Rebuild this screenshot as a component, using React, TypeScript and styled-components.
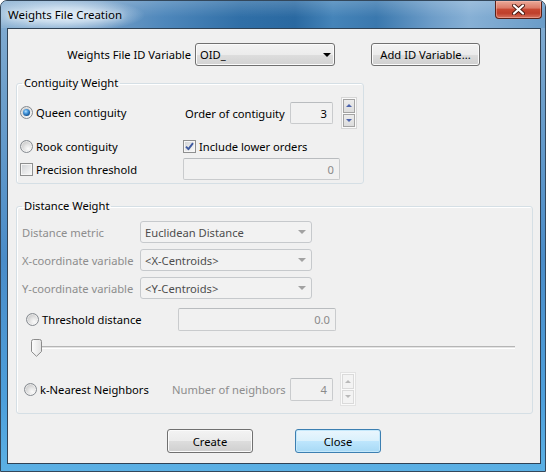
import React from 'react';
import styled, { createGlobalStyle, css } from 'styled-components';

const GlobalStyle = createGlobalStyle`
  html, body { margin: 0; padding: 0; background: #ffffff; }
  body {
    font-family: "Noto Sans", "Open Sans", "DejaVu Sans", sans-serif;
    font-size: 11.2px;
    color: #000;
  }
  * { box-sizing: border-box; }
`;

const Window = styled.div`
  width: 546px;
  height: 472px;
  display: flex;
  flex-direction: column;
  border: 1px solid #33475b;
  border-radius: 7px 7px 0 0;
  overflow: hidden;
  background: linear-gradient(180deg, #86aed2 0%, #6d9fcb 20%, #4a8cc8 55%, #4d9fdb 85%, #5bb0e4 100%);
`;

const TitleBar = styled.div`
  height: 27px;
  flex: none;
  display: flex;
  align-items: flex-start;
  padding: 0 3px 0 7px;
  background:
    radial-gradient(ellipse 82px 17px at 62px 14px, rgba(236, 244, 251, 0.95) 0%, rgba(220, 234, 246, 0.75) 45%, rgba(200, 222, 240, 0) 100%),
    linear-gradient(180deg, rgba(255, 255, 255, 0.18) 0%, rgba(255, 255, 255, 0) 60%),
    linear-gradient(90deg, #8cb2d3 0%, #749fc8 18%, #4e87bb 30%, #306fa7 44%, #2a69a1 54%, #4584b9 61%, #3a78ae 69%, #6c9cc8 79%, #87b0d5 86%, #6a9cc8 100%);
`;

const TitleText = styled.span`
  margin-top: 6px;
  line-height: 16px;
  font-size: 11.5px;
  color: #000;
  text-shadow: 0 0 6px rgba(255, 255, 255, 0.9);
`;

const CloseBox = styled.div`
  margin-left: auto;
  width: 47px;
  height: 18px;
  display: flex;
  align-items: center;
  justify-content: center;
  border: 1px solid #5a2118;
  border-top: none;
  border-radius: 0 0 4px 4px;
  background: linear-gradient(180deg, #eaa998 0%, #dc7c69 40%, #c74832 50%, #bf3f2b 72%, #d6735f 100%);
  box-shadow: inset 0 0 0 1px rgba(255, 196, 184, 0.45);
`;

const Frame = styled.div`
  flex: 1;
  display: flex;
  padding: 0 4px 7px 6px;
`;

const Client = styled.div`
  flex: 1;
  display: flex;
  flex-direction: column;
  border: 1px solid #2f4255;
  background: #f0f0f0;
`;

const TopRow = styled.div`
  display: flex;
  align-items: center;
  height: 23px;
  margin-top: 14px;
`;

const RightLabel = styled.span<{ $w: number }>`
  width: ${p => p.$w}px;
  flex: none;
  text-align: right;
  white-space: nowrap;
`;

const Combo = styled.div<{ $w: number; $h: number; $ml?: number; $disabled?: boolean }>`
  width: ${p => p.$w}px;
  height: ${p => p.$h}px;
  margin-left: ${p => p.$ml ?? 0}px;
  flex: none;
  display: flex;
  align-items: center;
  padding-left: 4px;
  border-radius: 3px;
  white-space: nowrap;
  ${p =>
    p.$disabled
      ? css`
          border: 1px solid #c6c9cc;
          background: #f2f2f2;
          color: #4d4d4d;
        `
      : css`
          border: 1px solid #707070;
          background: linear-gradient(180deg, #f3f3f3 0%, #ececec 50%, #dedede 50%, #d2d2d2 100%);
          box-shadow: inset 0 0 0 1px #fbfbfb;
          color: #000;
        `}
`;

const ComboText = styled.span`
  flex: 1;
`;

const ComboArrow = styled.span<{ $disabled?: boolean }>`
  width: 0;
  height: 0;
  border-left: 4px solid transparent;
  border-right: 4px solid transparent;
  border-top: 4px solid ${p => (p.$disabled ? '#a2a2a2' : '#000')};
  margin-right: ${p => (p.$disabled ? 5 : 3)}px;
`;

const Button = styled.button<{ $w: number; $h: number; $ml?: number; $default?: boolean }>`
  width: ${p => p.$w}px;
  height: ${p => p.$h}px;
  margin-left: ${p => p.$ml ?? 0}px;
  flex: none;
  padding: 0;
  font: inherit;
  color: #000;
  border-radius: 3px;
  ${p =>
    p.$default
      ? css`
          border: 1px solid #3c7fb1;
          background: linear-gradient(180deg, #eaf6fd 0%, #d9f0fc 50%, #bee6fd 50%, #a7d9f5 100%);
          box-shadow: inset 0 0 0 1px #c4e8fb;
        `
      : css`
          border: 1px solid #707070;
          background: linear-gradient(180deg, #f3f3f3 0%, #ebebeb 50%, #dddddd 50%, #cfcfcf 100%);
          box-shadow: inset 0 0 0 1px #fbfbfb;
        `}
`;

const Group = styled.fieldset<{ $w: number; $mt: number }>`
  width: ${p => p.$w}px;
  margin: ${p => p.$mt}px 0 0 8px;
  padding: 0;
  min-width: 0;
  flex: none;
  border: 1px solid #d5dfe5;
  border-radius: 3px;
  box-shadow: inset 1px 1px 0 #ffffff;
`;

const GroupTitle = styled.legend`
  margin-left: 5px;
  padding: 0 2px;
  line-height: 16px;
`;

const ContigGrid = styled.div`
  display: grid;
  grid-template-columns: 163px auto;
  grid-template-rows: 32px 26px 24px;
  align-items: end;
  padding: 7px 0 3px 3px;
`;

const Cell = styled.div<{ $h: number; $pb?: number }>`
  height: ${p => p.$h}px;
  padding-bottom: ${p => p.$pb ?? 0}px;
  display: flex;
  align-items: center;
`;

const DistBody = styled.div`
  display: flex;
  flex-direction: column;
  padding: 7px 0 7px 5px;
`;

const Row = styled.div<{ $h: number; $mt?: number; $pl?: number }>`
  height: ${p => p.$h}px;
  margin-top: ${p => p.$mt ?? 0}px;
  padding-left: ${p => p.$pl ?? 0}px;
  display: flex;
  align-items: center;
`;

const Label = styled.span<{ $w?: number; $ml?: number; $disabled?: boolean }>`
  ${p => (p.$w ? `width: ${p.$w}px;` : '')}
  margin-left: ${p => p.$ml ?? 0}px;
  flex: none;
  white-space: nowrap;
  color: ${p => (p.$disabled ? '#8d8d8d' : '#000')};
`;

const Option = styled.label<{ $w?: number; $ml?: number }>`
  ${p => (p.$w ? `width: ${p.$w}px;` : '')}
  margin-left: ${p => p.$ml ?? 0}px;
  flex: none;
  display: flex;
  align-items: center;
  white-space: nowrap;
`;

const RadioMark = styled.span<{ $checked?: boolean }>`
  position: relative;
  width: 13px;
  height: 13px;
  flex: none;
  margin-right: 3px;
  border-radius: 50%;
  border: 1px solid #868b91;
  background: radial-gradient(circle at 65% 70%, #fbfbfb 0%, #e6e6e6 35%, #cdcdcd 70%, #b9b9b9 100%);
  box-shadow: inset 0 0 0 1px rgba(255, 255, 255, 0.5);
  ${p =>
    p.$checked &&
    css`
      &::after {
        content: '';
        position: absolute;
        left: 2px;
        top: 2px;
        width: 7px;
        height: 7px;
        border-radius: 50%;
        background: radial-gradient(circle at 40% 35%, #b8e2ff 0%, #4d9de0 32%, #1a5b9b 68%, #0d3764 100%);
      }
    `}
`;

const CheckMark = styled.span`
  width: 13px;
  height: 13px;
  flex: none;
  margin-right: 3px;
  display: flex;
  align-items: center;
  justify-content: center;
  border: 1px solid #8e8f8f;
  background: linear-gradient(135deg, #cfd1d4 0%, #e6e7e8 50%, #fbfbfb 100%);
  box-shadow: inset 0 0 0 1px #f6f6f6;
`;

const Field = styled.div<{ $w: number; $h: number; $ml?: number; $muted?: boolean }>`
  width: ${p => p.$w}px;
  height: ${p => p.$h}px;
  margin-left: ${p => p.$ml ?? 0}px;
  flex: none;
  display: flex;
  align-items: center;
  justify-content: flex-end;
  padding-right: 5px;
  border: 1px solid #c9cbcd;
  border-top-color: #b9bcbf;
  border-radius: 2px;
  background: #f1f1f1;
  color: ${p => (p.$muted ? '#8a8a8a' : '#000')};
`;

const Spin = styled.div<{ $h: number; $ml?: number; $disabled?: boolean }>`
  width: 16px;
  height: ${p => p.$h}px;
  margin-left: ${p => p.$ml ?? 0}px;
  flex: none;
  display: flex;
  flex-direction: column;
  gap: 1px;
  padding: 1px;
  border: 1px solid ${p => (p.$disabled ? '#e2e2e2' : '#d6d6d6')};
  background: #fafafa;
`;

const SpinButton = styled.div<{ $disabled?: boolean }>`
  flex: 1;
  display: flex;
  align-items: center;
  justify-content: center;
  border: 1px solid ${p => (p.$disabled ? '#dadada' : '#a3a3a3')};
  background: ${p => (p.$disabled ? '#f3f3f3' : 'linear-gradient(180deg, #ececec 0%, #dcdcdc 100%)')};
`;

const SpinArrow = styled.span<{ $up?: boolean; $disabled?: boolean }>`
  width: 0;
  height: 0;
  border-left: 3px solid transparent;
  border-right: 3px solid transparent;
  ${p =>
    p.$up
      ? `border-bottom: 3px solid ${p.$disabled ? '#b9b9b9' : '#4b63ad'};`
      : `border-top: 3px solid ${p.$disabled ? '#b9b9b9' : '#4b63ad'};`}
`;

const Slider = styled.div`
  position: relative;
  width: 484px;
  height: 18px;
  margin-left: 9px;
  flex: none;
`;

const Track = styled.div`
  margin-top: 7px;
  height: 3px;
  border-top: 1px solid #b5b5b5;
  background: #e3e3e3;
  border-bottom: 1px solid #ffffff;
`;

const Thumb = styled.svg`
  position: absolute;
  left: 0;
  top: 0;
`;

const ButtonRow = styled.div`
  display: flex;
  justify-content: center;
  margin-top: 15px;
`;

const Radio = ({ checked, label, w, ml }: { checked?: boolean; label: string; w?: number; ml?: number }) => (
  <Option $w={w} $ml={ml}>
    <RadioMark $checked={checked} />
    {label}
  </Option>
);

const Check = ({ checked, label, w, ml }: { checked?: boolean; label: string; w?: number; ml?: number }) => (
  <Option $w={w} $ml={ml}>
    <CheckMark>
      {checked && (
        <svg width="9" height="9" viewBox="0 0 9 9">
          <path d="M1 4.6 L3.4 7.2 L8 1.2" fill="none" stroke="#3e5aa0" strokeWidth="1.9" strokeLinejoin="round" />
        </svg>
      )}
    </CheckMark>
    {label}
  </Option>
);

const SpinBox = ({ h, ml, disabled }: { h: number; ml?: number; disabled?: boolean }) => (
  <Spin $h={h} $ml={ml} $disabled={disabled}>
    <SpinButton $disabled={disabled}>
      <SpinArrow $up $disabled={disabled} />
    </SpinButton>
    <SpinButton $disabled={disabled}>
      <SpinArrow $disabled={disabled} />
    </SpinButton>
  </Spin>
);

const Dropdown = ({ text, w, h, ml, disabled }: { text: string; w: number; h: number; ml?: number; disabled?: boolean }) => (
  <Combo $w={w} $h={h} $ml={ml} $disabled={disabled}>
    <ComboText>{text}</ComboText>
    <ComboArrow $disabled={disabled} />
  </Combo>
);

export default function App() {
  return (
    <>
      <GlobalStyle />
      <Window>
        <TitleBar>
          <TitleText>Weights File Creation</TitleText>
          <CloseBox>
            <svg width="13" height="11" viewBox="0 0 13 11">
              <path d="M2 1.5 L11 9.5 M11 1.5 L2 9.5" stroke="#4a1a12" strokeWidth="4" strokeLinecap="round" />
              <path d="M2 1.5 L11 9.5 M11 1.5 L2 9.5" stroke="#ffffff" strokeWidth="2.2" strokeLinecap="round" />
            </svg>
          </CloseBox>
        </TitleBar>
        <Frame>
          <Client>
            <TopRow>
              <RightLabel $w={183}>Weights File ID Variable</RightLabel>
              <Dropdown text="OID_" w={140} h={23} ml={4} />
              <Button $w={109} $h={23} $ml={36}>Add ID Variable...</Button>
            </TopRow>

            <Group $w={348} $mt={9}>
              <GroupTitle>Contiguity Weight</GroupTitle>
              <ContigGrid>
                <Cell $h={32} $pb={3}>
                  <Radio checked label="Queen contiguity" />
                </Cell>
                <Cell $h={32} $pb={2}>
                  <Label $w={105} $ml={2}>Order of contiguity</Label>
                  <Field $w={43} $h={22}>3</Field>
                  <SpinBox h={32} ml={8} />
                </Cell>
                <Cell $h={20}>
                  <Radio label="Rook contiguity" />
                </Cell>
                <Cell $h={20}>
                  <Check checked label="Include lower orders" />
                </Cell>
                <Cell $h={22}>
                  <Check label="Precision threshold" />
                </Cell>
                <Cell $h={22}>
                  <Field $w={157} $h={22} $muted>0</Field>
                </Cell>
              </ContigGrid>
            </Group>

            <Group $w={517} $mt={14}>
              <GroupTitle>Distance Weight</GroupTitle>
              <DistBody>
                <Row $h={22}>
                  <Label $w={118} $disabled>Distance metric</Label>
                  <Dropdown text="Euclidean Distance" w={172} h={22} disabled />
                </Row>
                <Row $h={22} $mt={6}>
                  <Label $w={118} $disabled>X-coordinate variable</Label>
                  <Dropdown text="<X-Centroids>" w={172} h={22} disabled />
                </Row>
                <Row $h={22} $mt={6}>
                  <Label $w={118} $disabled>Y-coordinate variable</Label>
                  <Dropdown text="<Y-Centroids>" w={172} h={22} disabled />
                </Row>
                <Row $h={23} $mt={9} $pl={4}>
                  <Radio label="Threshold distance" w={152} />
                  <Field $w={158} $h={23} $muted>0.0</Field>
                </Row>
                <Row $h={18} $mt={8}>
                  <Slider>
                    <Track />
                    <Thumb width="11" height="18" viewBox="0 0 11 18">
                      <defs>
                        <linearGradient id="thumbFill" x1="0" y1="0" x2="1" y2="0">
                          <stop offset="0" stopColor="#fdfdfd" />
                          <stop offset="1" stopColor="#e2e2e2" />
                        </linearGradient>
                      </defs>
                      <path
                        d="M0.5 2.5 Q0.5 0.5 2.5 0.5 H8.5 Q10.5 0.5 10.5 2.5 V12.5 L5.5 17.3 L0.5 12.5 Z"
                        fill="url(#thumbFill)"
                        stroke="#8b8b8b"
                      />
                    </Thumb>
                  </Slider>
                </Row>
                <Row $h={34} $mt={15} $pl={2}>
                  <Radio label="k-Nearest Neighbors" w={148} />
                  <Label $w={118} $disabled>Number of neighbors</Label>
                  <Field $w={43} $h={23} $muted>4</Field>
                  <SpinBox h={34} ml={7} disabled />
                </Row>
              </DistBody>
            </Group>

            <ButtonRow>
              <Button $w={86} $h={24}>Create</Button>
              <Button $w={86} $h={24} $ml={42} $default>Close</Button>
            </ButtonRow>
          </Client>
        </Frame>
      </Window>
    </>
  );
}
